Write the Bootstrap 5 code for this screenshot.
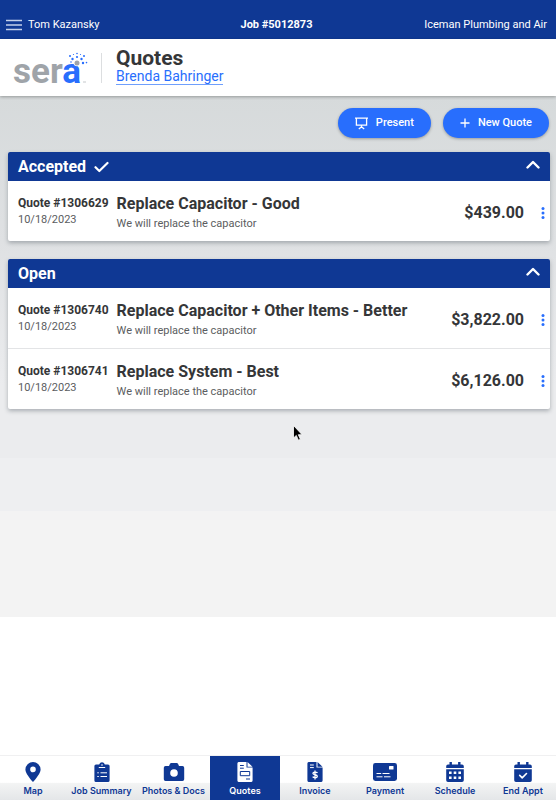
<!DOCTYPE html>
<html lang="en">
<head>
<meta charset="utf-8">
<meta name="viewport" content="width=device-width, initial-scale=1">
<title>Quotes - Job #5012873</title>
<link rel="stylesheet" href="https://cdn.jsdelivr.net/npm/bootstrap@5.3.0/dist/css/bootstrap.min.css">
<style>
:root { --navy: #0f3894; --azure: #286efd; --ink: #353638; }
body { font-family: Roboto, "Liberation Sans", sans-serif; font-size: 11px; line-height: 16px; color: var(--ink); background: #fff; }
button { font-family: inherit; }
svg { display: block; flex: none; }
.bg-navy { background: var(--navy); color: #fff; }
.top-bar { display: grid; grid-template-columns: 1fr auto 1fr; align-items: center; padding: 17px 9px 6px 6px; min-height: 39px; }
.plain-btn { background: none; border: 0; padding: 0; color: inherit; }
.person { gap: 6px; }
.page-head { background: #fff; min-height: 57px; padding: 0 14px; box-shadow: 0 1px 3px rgba(0,0,0,.3); position: relative; }
.logo { overflow: visible; }
.logo-text { font-weight: 700; font-size: 35px; fill: #9fa4a9; }
.logo-text .accent { fill: var(--azure); }
.head-rule { width: 1px; height: 30px; background: #dcdee0; margin: 0 14px; }
.head-text { padding-bottom: 2px; }
.page-title { font-size: 21px; line-height: 20px; font-weight: 700; margin: 0; }
.client-link { font-size: 14px; line-height: 16px; color: var(--azure); text-decoration: none; border-bottom: 1px solid #6f9ffc; }
main { background: linear-gradient(#d6dadb 0, #dfe1e3 22%, #ebecee 44%, #ebecee 55%, #eeeff1 55%, #eeeff1 63%, #f3f3f3 63%, #f3f3f3 79%, #fff 79%); padding: 12px 6px 16px 8px; }
.actions { gap: 12px; margin: 0 1px 14px 0; }
.pill { background: var(--azure); color: #fff; font-size: 11px; line-height: 16px; font-weight: 500; padding: 7px 17px; gap: 8px; min-height: 30px; box-shadow: 0 1px 3px rgba(0,0,0,.3); }
.pill:hover { background: #1c5fe8; color: #fff; }
.quote-card { border: 0; border-radius: 2px; box-shadow: 0 2px 4px rgba(70,80,90,.4); margin-bottom: 18px; overflow: hidden; }
.quote-head { min-height: 29px; padding: 1px 10px 0; }
.quote-head h2 { font-size: 16px; line-height: 20px; font-weight: 700; margin: 0; }
.quote-row { min-height: 60px; padding: 13px 4px 9px 10px; gap: 8px; }
.quote-row + .quote-row { border-top: 1px solid #e3e4e6; }
.quote-no { font-size: 12px; line-height: 18px; font-weight: 700; }
.quote-sub { font-size: 11px; line-height: 16px; color: #5b5d60; }
.quote-name { font-size: 16px; line-height: 20px; font-weight: 700; margin-bottom: 2px; }
.quote-price { font-size: 16px; line-height: 20px; font-weight: 700; }
.tab-bar { display: grid; grid-template-columns: 66fr 71fr 73fr 70fr 70fr 70fr 70fr 66fr; min-height: 45px; background: linear-gradient(#fff 60%, #f3f4f4 62%, #e4e6e8); border-top: 1px solid #f0f0f1; font-family: Inter, sans-serif; }
.tab-link { display: flex; flex-direction: column; align-items: center; justify-content: end; gap: 3px; color: var(--navy); text-decoration: none; font-size: 9px; line-height: 12px; font-weight: 600; white-space: nowrap; padding: 6px 0 3px; min-width: 0; }
.tab-link.active { background: var(--navy); color: #fff; }
.pointer { position: absolute; left: 292px; top: 424px; pointer-events: none; }
</style>
<script src="https://cdn.jsdelivr.net/npm/bootstrap@5.3.0/dist/js/bootstrap.bundle.min.js"></script>
</head>
<body class="min-vh-100 d-flex flex-column">
<header>
  <div class="top-bar bg-navy">
    <div class="person d-flex align-items-center">
      <button class="plain-btn" type="button" aria-label="Menu">
        <svg width="16" height="12" viewBox="0 0 16 12" stroke="#c4d0ea" stroke-width="1.4"><path d="M0 1.5h16M0 6h16M0 10.5h16"/></svg>
      </button>
      <span>Tom Kazansky</span>
    </div>
    <span class="fw-bold">Job #5012873</span>
    <span class="text-end">Iceman Plumbing and Air</span>
  </div>
  <div class="page-head d-flex align-items-center">
    <svg class="logo" width="73" height="38" viewBox="0 0 73 38" role="img" aria-label="sera">
      <text class="logo-text" x="-1" y="34">ser<tspan class="accent">a</tspan></text>
      <circle cx="63" cy="14" r="3.2" fill="#fff"/><circle cx="63" cy="14" r="2.5" fill="#9fa4a9"/>
      <g fill="#286efd"><circle cx="63" cy="8" r="1.1"/><circle cx="63" cy="4.5" r=".8"/><circle cx="58.5" cy="10" r="1.2"/><circle cx="56" cy="7" r="1"/><circle cx="67.5" cy="10" r="1.2"/><circle cx="70" cy="7" r="1"/><circle cx="69" cy="14" r="1.2"/><circle cx="72.5" cy="13.6" r=".8"/><circle cx="57" cy="13" r=".8"/><circle cx="59.5" cy="5.5" r=".6"/><circle cx="66.5" cy="5.5" r=".6"/></g>
      <path d="M69 33h3" stroke="#c5c8cb" stroke-width="1"/>
    </svg>
    <div class="head-rule"></div>
    <div class="head-text d-flex flex-column align-items-start">
      <h1 class="page-title">Quotes</h1>
      <a class="client-link" href="#">Brenda Bahringer</a>
    </div>
  </div>
</header>

<main class="flex-grow-1">
  <div class="actions d-flex justify-content-end">
    <button type="button" class="btn pill rounded-pill border-0 d-flex align-items-center">
      <svg width="13" height="13" viewBox="0 0 13 13" fill="none" stroke="#fff" stroke-width="1.3"><path d="M0 1.2h13M1.4 1.2v7h10.2v-7M6.5 8.2v2M3.8 12l2.7-2.2L9.2 12"/></svg>
      Present
    </button>
    <button type="button" class="btn pill rounded-pill border-0 d-flex align-items-center">
      <svg width="10" height="10" viewBox="0 0 10 10" stroke="#fff" stroke-width="1.3"><path d="M5 .5v9M.5 5h9"/></svg>
      New Quote
    </button>
  </div>

  <section class="card quote-card">
    <div class="quote-head bg-navy d-flex align-items-center gap-2">
      <h2>Accepted</h2>
      <svg width="15" height="12" viewBox="0 0 15 12" fill="none" stroke="#fff" stroke-width="2.2" stroke-linecap="round" stroke-linejoin="round"><path d="M1.5 6.2l3.800 3.800L13.500 2"/></svg>
      <button class="plain-btn ms-auto pb-1" type="button" aria-label="Toggle accepted quotes" data-bs-toggle="collapse" data-bs-target="#accepted">
        <svg width="14" height="10" viewBox="0 0 14 10" fill="none" stroke="#fff" stroke-width="2.4" stroke-linecap="round" stroke-linejoin="round"><path d="M1.500 7.500L7 2l5.500 5.500"/></svg>
      </button>
    </div>
    <div class="collapse show" id="accepted">
      <div class="quote-row d-flex">
        <div><div class="quote-no">Quote #1306629</div><div class="quote-sub">10/18/2023</div></div>
        <div class="flex-grow-1"><div class="quote-name">Replace Capacitor - Good</div><div class="quote-sub">We will replace the capacitor</div></div>
        <div class="d-flex align-items-center gap-3">
          <span class="quote-price">$439.00</span>
          <button class="plain-btn" type="button" aria-label="Options for quote 1306629"><svg width="6" height="12" viewBox="0 0 6 12" fill="#286efd"><circle cx="3" cy="1.6" r="1.5"/><circle cx="3" cy="6" r="1.5"/><circle cx="3" cy="10.4" r="1.5"/></svg></button>
        </div>
      </div>
    </div>
  </section>

  <section class="card quote-card">
    <div class="quote-head bg-navy d-flex align-items-center gap-2">
      <h2>Open</h2>
      <button class="plain-btn ms-auto pb-1" type="button" aria-label="Toggle open quotes" data-bs-toggle="collapse" data-bs-target="#open">
        <svg width="14" height="10" viewBox="0 0 14 10" fill="none" stroke="#fff" stroke-width="2.4" stroke-linecap="round" stroke-linejoin="round"><path d="M1.500 7.500L7 2l5.500 5.500"/></svg>
      </button>
    </div>
    <div class="collapse show" id="open">
      <div class="quote-row d-flex">
        <div><div class="quote-no">Quote #1306740</div><div class="quote-sub">10/18/2023</div></div>
        <div class="flex-grow-1"><div class="quote-name">Replace Capacitor + Other Items - Better</div><div class="quote-sub">We will replace the capacitor</div></div>
        <div class="d-flex align-items-center gap-3">
          <span class="quote-price">$3,822.00</span>
          <button class="plain-btn" type="button" aria-label="Options for quote 1306740"><svg width="6" height="12" viewBox="0 0 6 12" fill="#286efd"><circle cx="3" cy="1.6" r="1.5"/><circle cx="3" cy="6" r="1.5"/><circle cx="3" cy="10.4" r="1.5"/></svg></button>
        </div>
      </div>
      <div class="quote-row d-flex">
        <div><div class="quote-no">Quote #1306741</div><div class="quote-sub">10/18/2023</div></div>
        <div class="flex-grow-1"><div class="quote-name">Replace System - Best</div><div class="quote-sub">We will replace the capacitor</div></div>
        <div class="d-flex align-items-center gap-3">
          <span class="quote-price">$6,126.00</span>
          <button class="plain-btn" type="button" aria-label="Options for quote 1306741"><svg width="6" height="12" viewBox="0 0 6 12" fill="#286efd"><circle cx="3" cy="1.6" r="1.5"/><circle cx="3" cy="6" r="1.5"/><circle cx="3" cy="10.4" r="1.5"/></svg></button>
        </div>
      </div>
    </div>
  </section>
</main>

<nav class="tab-bar" aria-label="Job sections">
  <a class="tab-link" href="#"><svg width="16" height="20" viewBox="0 0 16 20"><path fill="currentColor" fill-rule="evenodd" d="M8 0a7.6 7.6 0 0 1 7.6 7.6C15.6 11 11 17 8 20 5 17 .4 11 .4 7.6A7.6 7.6 0 0 1 8 0zm0 4.6a2.8 2.8 0 1 0 0 5.6 2.8 2.8 0 0 0 0-5.6z"/></svg>Map</a>
  <a class="tab-link" href="#"><svg width="16" height="20" viewBox="0 0 16 20"><path fill="currentColor" d="M2 2.5h3.2a2.9 2.9 0 0 1 5.6 0H14a1.6 1.6 0 0 1 1.6 1.6v14.3A1.6 1.6 0 0 1 14 20H2a1.6 1.6 0 0 1-1.6-1.6V4.1A1.6 1.6 0 0 1 2 2.5z"/><path stroke="#fff" d="M6.5 10.8H13M6.5 14.5H13M3.3 10.8h1.5M3.3 14.5h1.5M4.8 5.5h6.4"/><circle cx="8" cy="3" r=".8" fill="#fff"/></svg>Job Summary</a>
  <a class="tab-link" href="#"><svg width="22" height="20" viewBox="0 0 22 20"><path fill="currentColor" d="M6 4l1-2.3A1.5 1.5 0 0 1 8.4 1h5.2a1.5 1.5 0 0 1 1.4.7L16 4h3.5A1.7 1.7 0 0 1 21.2 5.7v11.6a1.7 1.7 0 0 1-1.7 1.7h-17A1.7 1.7 0 0 1 .8 17.3V5.7A1.7 1.7 0 0 1 2.5 4z"/><circle cx="11" cy="11" r="3.8" fill="#fff"/></svg>Photos &amp; Docs</a>
  <a class="tab-link active" href="#" aria-current="page"><svg width="16" height="20" viewBox="0 0 16 20"><path fill="#fff" d="M2 0h7.5v5.5h6.1v13A1.5 1.5 0 0 1 14 20H2a1.5 1.5 0 0 1-1.6-1.5v-17A1.5 1.5 0 0 1 2 0zM10.500 0l5 4.700h-5z"/><path fill="none" stroke="#0f3894" d="M3 3.500h3.800M3 6.200h3.800M3.300 9.500h9.400v4.200H3.300zM9 17h4"/></svg>Quotes</a>
  <a class="tab-link" href="#"><svg width="16" height="20" viewBox="0 0 16 20"><path fill="currentColor" d="M2 0h7.5v5.5h6.1v13A1.5 1.5 0 0 1 14 20H2a1.5 1.5 0 0 1-1.6-1.5v-17A1.5 1.5 0 0 1 2 0zM10.500 0l5 4.700h-5z"/><path fill="none" stroke="#fff" d="M3 3h3.800M3 5.600h3.800"/><path fill="none" stroke="#fff" stroke-width="1.3" d="M10.400 11C10 10 6 9.500 5.900 11.300c0 1.900 4.400 1 4.400 3 0 1.900-4 1.500-4.600.3M8 8.500v9"/></svg>Invoice</a>
  <a class="tab-link" href="#"><svg width="24" height="20" viewBox="0 0 24 20"><rect y="1" width="24" height="18" rx="2.4" fill="currentColor"/><rect x="16" y="4" width="4.5" height="3.5" rx=".5" fill="#fff"/><path stroke="#fff" d="M3.500 11.500h4.700M9.500 11.500h7M3.500 14.800h6M11 14.800h6.500"/></svg>Payment</a>
  <a class="tab-link" href="#"><svg width="18" height="20" viewBox="0 0 18 20"><path fill="currentColor" d="M3.500 0h2.400v2.500h6.200V0h2.400v2.500H16A1.800 1.800 0 0 1 17.800 4.300V6H.2V4.300A1.800 1.800 0 0 1 2 2.500h1.500zM.2 7.200h17.600v11A1.800 1.800 0 0 1 16 20H2A1.800 1.800 0 0 1 .2 18.200z"/><path fill="#fff" d="M3 9.500h2.600v2.600H3zm4.700 0h2.600v2.600H7.700zm4.700 0H15v2.600h-2.600zM3 14.500h2.600v2.600H3zm4.700 0h2.600v2.600H7.700zm4.700 0H15v2.600h-2.600z"/></svg>Schedule</a>
  <a class="tab-link" href="#"><svg width="18" height="20" viewBox="0 0 18 20"><path fill="currentColor" d="M3.500 0h2.400v2.500h6.200V0h2.400v2.500H16A1.800 1.800 0 0 1 17.800 4.300V6H.2V4.300A1.800 1.800 0 0 1 2 2.500h1.500zM.2 7.200h17.600v11A1.800 1.800 0 0 1 16 20H2A1.800 1.800 0 0 1 .2 18.200z"/><path fill="none" stroke="#fff" stroke-width="1.6" stroke-linecap="round" stroke-linejoin="round" d="M5.700 13.400l2.500 2.500 4.300-4.400"/></svg>End Appt</a>
</nav>

<svg class="pointer" width="11" height="18" viewBox="0 0 11 18" aria-hidden="true"><path d="M1.500 1.500v12.500l2.800-2.600 2.100 4.800 2-.9-2.100-4.600h3.800z" fill="#000" stroke="#fff" stroke-width=".8"/></svg>
</body>
</html>
